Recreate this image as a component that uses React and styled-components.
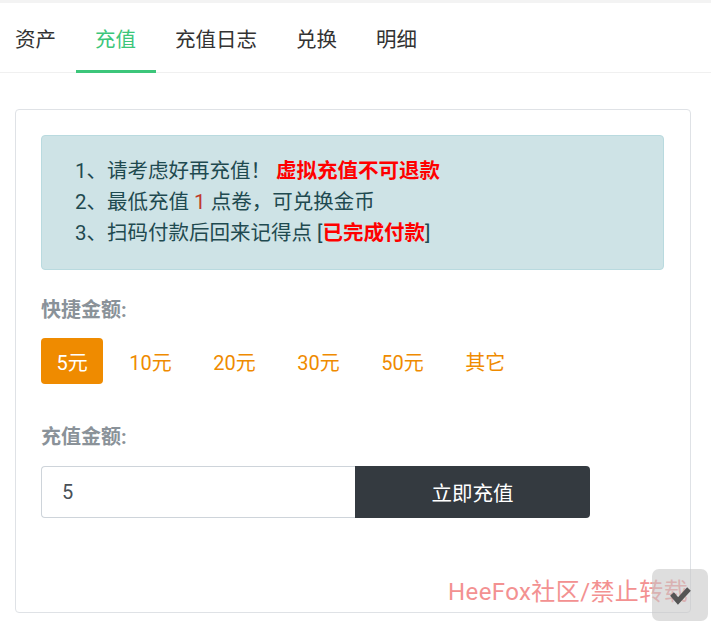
import React, { useState } from 'react'
import styled, { createGlobalStyle } from 'styled-components'

const GlobalStyle = createGlobalStyle`
	html, body {
		margin: 0;
		padding: 0;
		background: #fff;
		font-family: Roboto, "Noto Sans CJK SC", sans-serif;
		color: #333;
	}
	* { box-sizing: border-box; }
`

const Page = styled.div`
	width: 711px;
	min-height: 631px;
	border-top: 3px solid #f3f3f3;
`

const TabBar = styled.div`
	display: flex;
	height: 70px;
	border-bottom: 1px solid #f0f0f0;
`

const Tab = styled.div`
	position: relative;
	display: flex;
	align-items: center;
	padding: 0 19.5px;
	font-size: 20.5px;
	color: ${p => p.active ? '#3cc67a' : '#333'};
	&:first-child { padding-left: 15px; }
	&::after {
		content: '';
		position: absolute;
		left: 0;
		right: 0;
		bottom: -1px;
		height: 3px;
		background: ${p => p.active ? '#3cc67a' : 'transparent'};
	}
`

const Card = styled.div`
	width: 676px;
	margin: 36px 0 0 15px;
	border: 1px solid #dfe2e6;
	border-radius: 4px;
	padding: 25px 26px 94px 25px;
`

const Alert = styled.div`
	background: #cee3e6;
	border: 1px solid #b9dadf;
	border-radius: 4px;
	padding: 20px 33px;
	color: #1f4a50;
	font-size: 20.5px;
	line-height: 31px;
`

const Red = styled.span`
	color: ${p => p.bold ? '#ff0000' : '#c0392b'};
	font-weight: ${p => p.bold ? 700 : 400};
`

const Label = styled.div`
	margin-top: ${p => p.top}px;
	font-size: 20px;
	font-weight: 700;
	color: #8a9299;
	line-height: 28px;
`

const Amounts = styled.div`
	display: flex;
	gap: 10.5px;
	margin-top: 14px;
`

const Amount = styled.div`
	height: 46px;
	display: flex;
	align-items: center;
	padding: 0 15.5px;
	border-radius: 4px;
	font-size: 20px;
	background: ${p => p.active ? '#ef8b00' : 'transparent'};
	color: ${p => p.active ? '#fff' : '#ef8b00'};
	cursor: pointer;
`

const InputGroup = styled.div`
	display: flex;
	margin-top: 15px;
	width: 549px;
	height: 52px;
`

const Input = styled.input`
	width: 314px;
	height: 100%;
	border: 1px solid #ced4da;
	border-right: none;
	border-radius: 4px 0 0 4px;
	padding: 0 20px;
	font-size: 20px;
	font-family: Roboto, sans-serif;
	color: #495057;
	outline: none;
`

const SubmitButton = styled.button`
	flex: 1;
	height: 100%;
	border: none;
	border-radius: 0 4px 4px 0;
	background: #343a40;
	color: #fff;
	font-size: 20.5px;
	font-family: Roboto, "Noto Sans CJK SC", sans-serif;
`

const Watermark = styled.div`
	position: absolute;
	left: 448px;
	top: 572px;
	font-size: 24px;
	letter-spacing: 0.4px;
	color: #f39191;
	white-space: nowrap;
	font-family: Roboto, "Noto Sans CJK SC", sans-serif;
`

const BackTop = styled.div`
	position: absolute;
	left: 652px;
	top: 569px;
	width: 56px;
	height: 52px;
	border-radius: 7px;
	background: rgba(200, 200, 200, 0.6);
	display: flex;
	align-items: center;
	justify-content: center;
`

const tabs = ['资产', '充值', '充值日志', '兑换', '明细']
const amounts = ['5元', '10元', '20元', '30元', '50元', '其它']

const App = () => {
	const [value, setValue] = useState('5')
	const [picked, setPicked] = useState(0)

	return (
		<Page>
			<GlobalStyle />
			<TabBar>
				{ tabs.map((t, i) => <Tab key={ t } active={ i === 1 }>{ t }</Tab>) }
			</TabBar>
			<Card>
				<Alert>
					<div>1、请考虑好再充值！ <Red bold>虚拟充值不可退款</Red></div>
					<div>2、最低充值 <Red>1</Red> 点卷，可兑换金币</div>
					<div>3、扫码付款后回来记得点 [<Red bold>已完成付款</Red>]</div>
				</Alert>
				<Label top={ 26 }>快捷金额:</Label>
				<Amounts>
					{ amounts.map((a, i) => (
						<Amount key={ a } active={ i === picked } onClick={ () => setPicked(i) }>{ a }</Amount>
					)) }
				</Amounts>
				<Label top={ 39 }>充值金额:</Label>
				<InputGroup>
					<Input value={ value } onChange={ e => setValue(e.target.value) } />
					<SubmitButton>立即充值</SubmitButton>
				</InputGroup>
			</Card>
			<Watermark>HeeFox社区/禁止转载</Watermark>
			<BackTop>
				<svg width="26" height="26" viewBox="0 0 26 26">
					<polyline points="5,12 11,19 22,7" fill="none" stroke="#555" strokeWidth="5" strokeLinejoin="miter" />
				</svg>
			</BackTop>
		</Page>
	)
}

export default App
